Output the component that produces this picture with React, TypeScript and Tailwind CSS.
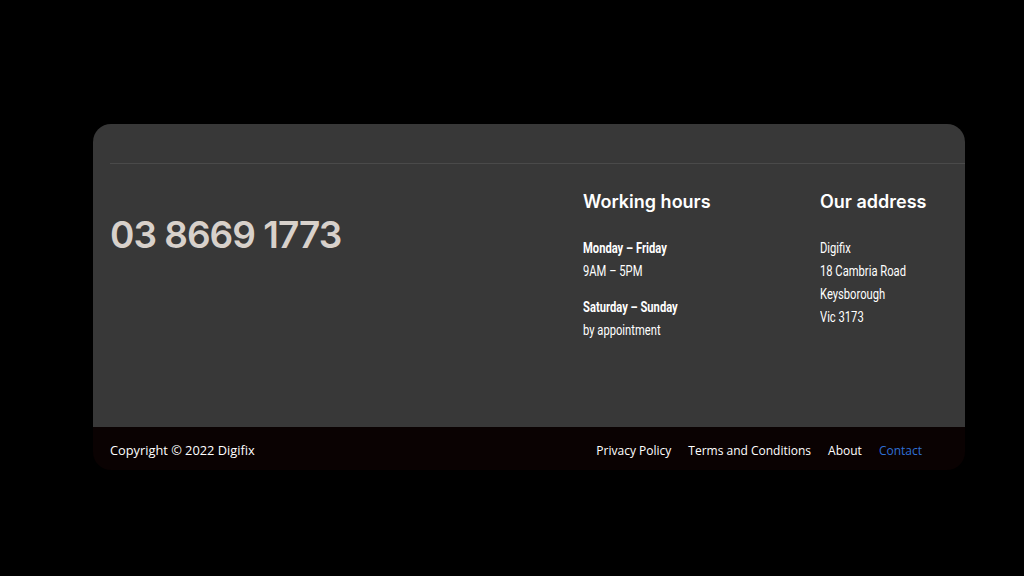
export default function App() {
  const links = ['Privacy Policy', 'Terms and Conditions', 'About'];

  return (
    <div className="w-[1024px] h-[576px] bg-black pt-[124px] pl-[93px]">
      <div className="w-[872px] rounded-t-[18px] rounded-b-[18px] overflow-hidden">
        <div className="bg-[#383838] pl-[17px] pt-[39px] h-[303px]">
          <div className="h-px bg-[#4a4a4a]" />
          <div className="flex">
            <div className="flex-1 pt-[47px]">
              <p
                className="text-[37px] leading-[48px] font-semibold text-[#d8d1cb] tracking-[-1px]"
                style={{ fontFamily: 'Inter, "Noto Sans", sans-serif' }}
              >
                03 8669 1773
              </p>
            </div>
            <div className="w-[237px] pt-[26px]">
              <h3
                className="text-[18px] leading-[24px] font-semibold text-white"
                style={{ fontFamily: 'Inter, "Noto Sans", sans-serif' }}
              >
                Working hours
              </h3>
              <div
                className="mt-[23px] text-[14px] leading-[23px] text-white origin-left scale-x-[0.8]"
                style={{ fontFamily: 'Roboto, sans-serif' }}
              >
                <p className="font-bold">Monday – Friday</p>
                <p>9AM – 5PM</p>
                <p className="font-bold mt-[13px]">Saturday – Sunday</p>
                <p>by appointment</p>
              </div>
            </div>
            <div className="w-[145px] pt-[26px]">
              <h3
                className="text-[18px] leading-[24px] font-semibold text-white"
                style={{ fontFamily: 'Inter, "Noto Sans", sans-serif' }}
              >
                Our address
              </h3>
              <div
                className="mt-[23px] text-[14px] leading-[23px] text-white origin-left scale-x-[0.8]"
                style={{ fontFamily: 'Roboto, sans-serif' }}
              >
                <p>Digifix</p>
                <p>18 Cambria Road</p>
                <p>Keysborough</p>
                <p>Vic 3173</p>
              </div>
            </div>
          </div>
        </div>
        <div
          className="bg-[#0a0202] h-[43px] pl-[17px] pr-[43px] pt-[4px] flex items-center justify-between text-white"
          style={{ fontFamily: '"Open Sans", sans-serif' }}
        >
          <span className="text-[12.8px]">Copyright © 2022 Digifix</span>
          <nav className="flex gap-[17px] text-[12px]">
            {links.map((l) => (
              <a key={l} href="#" className="text-white">
                {l}
              </a>
            ))}
            <a href="#" className="text-[#2f6fd6]">
              Contact
            </a>
          </nav>
        </div>
      </div>
    </div>
  );
}
